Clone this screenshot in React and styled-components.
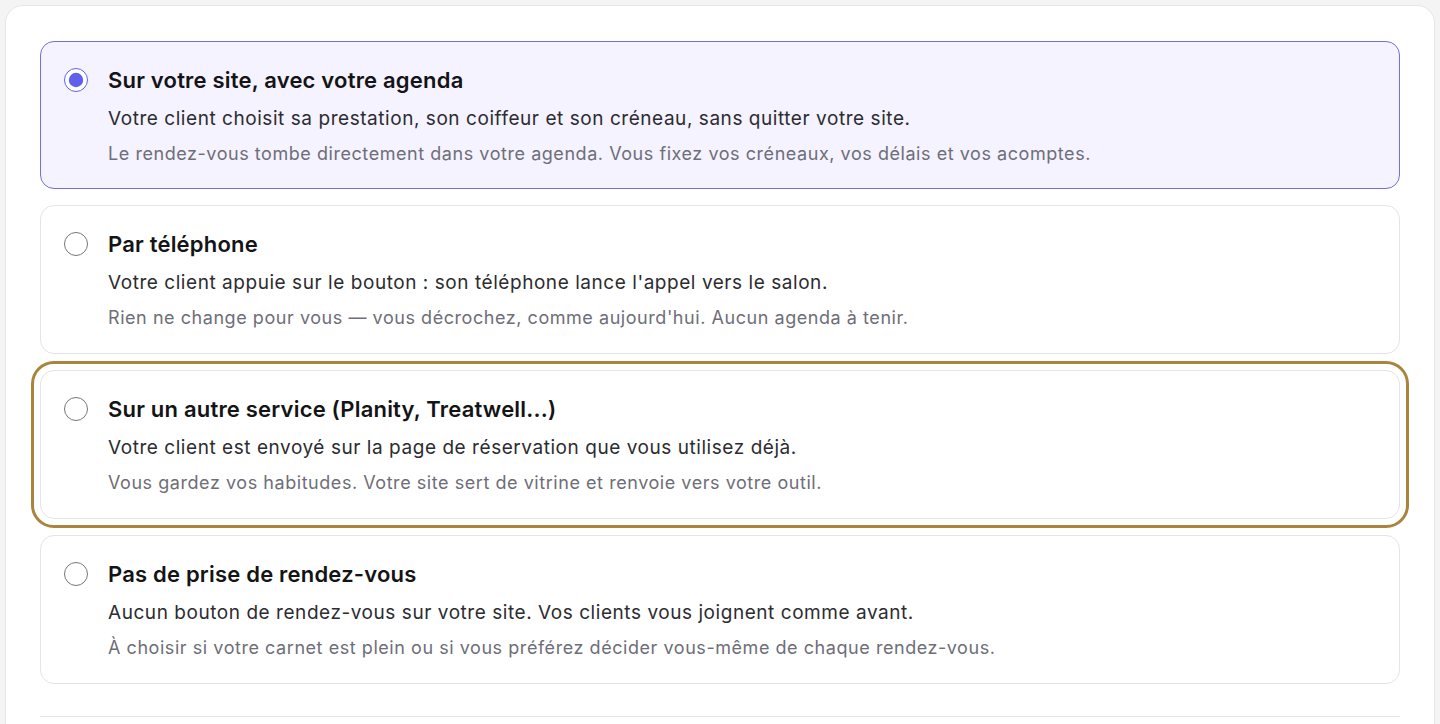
import React, { useState } from 'react'
import styled, { createGlobalStyle } from 'styled-components'

const GlobalStyle = createGlobalStyle`
  body {
    margin: 0;
    background: #f4f4f4;
    font-family: Inter, "Noto Sans", sans-serif;
    -webkit-font-smoothing: antialiased;
  }
`

const Page = styled.div`
  padding: 5px 5px 0;
`

const Panel = styled.section`
  background: #ffffff;
  border: 1px solid #e6e6e6;
  border-radius: 18px;
  padding: 35px 34px 60px;
`

const OptionList = styled.div`
  display: flex;
  flex-direction: column;
  gap: 16px;
`

const Option = styled.label`
  display: flex;
  align-items: flex-start;
  gap: 20px;
  padding: 24px 23px ${p => (p.$selected ? '22px' : '23px')};
  border-radius: 14px;
  cursor: pointer;
  border: 1px solid ${p => (p.$selected ? '#6d70e3' : '#e4e4e7')};
  background: ${p => (p.$selected ? '#f4f3ff' : '#ffffff')};
  outline: ${p => (p.$focused ? '3px solid #a8843c' : 'none')};
  outline-offset: 6px;
`

const Radio = styled.input.attrs({ type: 'radio' })`
  flex: none;
  width: 24px;
  height: 24px;
  margin: 2px 0 0;
  accent-color: #5f60eb;
  cursor: pointer;
`

const Body = styled.div`
  display: flex;
  flex-direction: column;
`

const Title = styled.span`
  font-size: 22px;
  line-height: 28px;
  font-weight: 600;
  letter-spacing: 0.2px;
  color: #141416;
`

const Desc = styled.span`
  margin-top: 11px;
  font-size: 19px;
  line-height: 28px;
  letter-spacing: 0.55px;
  color: #2c2c31;
`

const Note = styled.span`
  margin-top: 9px;
  font-size: 18px;
  line-height: 24px;
  letter-spacing: 0.55px;
  color: #6e6e78;
`

const Divider = styled.hr`
  margin: 32px 0 0;
  border: 0;
  border-top: 1px solid #e6e6e6;
`

const options = [
  {
    id: 'site',
    title: 'Sur votre site, avec votre agenda',
    desc: 'Votre client choisit sa prestation, son coiffeur et son créneau, sans quitter votre site.',
    note: 'Le rendez-vous tombe directement dans votre agenda. Vous fixez vos créneaux, vos délais et vos acomptes.',
  },
  {
    id: 'phone',
    title: 'Par téléphone',
    desc: "Votre client appuie sur le bouton : son téléphone lance l'appel vers le salon.",
    note: "Rien ne change pour vous — vous décrochez, comme aujourd'hui. Aucun agenda à tenir.",
  },
  {
    id: 'external',
    title: 'Sur un autre service (Planity, Treatwell...)',
    desc: 'Votre client est envoyé sur la page de réservation que vous utilisez déjà.',
    note: 'Vous gardez vos habitudes. Votre site sert de vitrine et renvoie vers votre outil.',
  },
  {
    id: 'none',
    title: 'Pas de prise de rendez-vous',
    desc: 'Aucun bouton de rendez-vous sur votre site. Vos clients vous joignent comme avant.',
    note: 'À choisir si votre carnet est plein ou si vous préférez décider vous-même de chaque rendez-vous.',
  },
]

export default function App() {
  const [value, setValue] = useState('site')

  return (
    <Page>
      <GlobalStyle />
      <Panel>
        <OptionList>
          {options.map(o => (
            <Option key={o.id} $selected={value === o.id} $focused={o.id === 'external'}>
              <Radio
                name="booking"
                checked={value === o.id}
                onChange={() => setValue(o.id)}
              />
              <Body>
                <Title>{o.title}</Title>
                <Desc>{o.desc}</Desc>
                <Note>{o.note}</Note>
              </Body>
            </Option>
          ))}
        </OptionList>
        <Divider />
      </Panel>
    </Page>
  )
}
